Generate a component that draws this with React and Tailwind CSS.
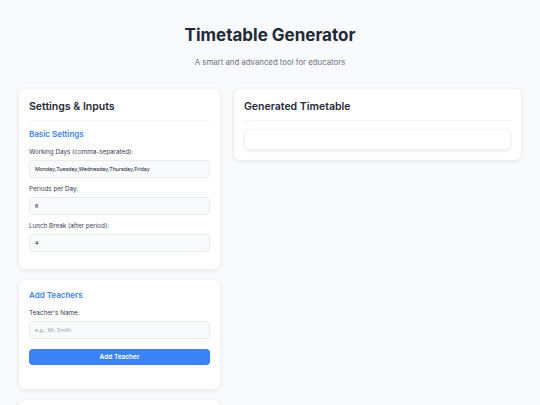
export default function App() {
  const inputCls =
    'block w-full h-[18px] rounded-[4px] border border-[#e8ecf1] bg-[#f8fafc] px-[5px] text-[5.3px] leading-[8px] text-[#111827] outline-none';
  const labelCls = 'block text-[6.3px] leading-[8px] text-[#374151] mb-[4px]';

  return (
    <div className="min-h-screen bg-[#f8fafc] font-['Inter',sans-serif] text-[#1f2937]">
      <header className="pt-[24px] pb-[22px] text-center">
        <h1 className="text-[17px] font-bold leading-[22px] text-[#1f2937]">Timetable Generator</h1>
        <p className="mt-[11px] text-[7.8px] leading-[10px] text-[#6b7280]">A smart and advanced tool for educators</p>
      </header>

      <div className="mx-auto grid w-[502px] grid-cols-[201px_1fr] items-start gap-[14px]">
        {/* Left column */}
        <div className="flex flex-col gap-[11px]">
          <div className="rounded-[6px] bg-white px-[10px] pt-[11px] pb-[17px] shadow-[0_1px_4px_rgba(0,0,0,0.1)]">
            <h2 className="text-[10.5px] font-semibold leading-[14px] pb-[6px] border-b border-[#f1f5f9]">
              Settings & Inputs
            </h2>
            <h3 className="mt-[8px] text-[8px] font-semibold leading-[10px] text-[#3b82f6]">Basic Settings</h3>
            <div className="mt-[9px]">
              <label className={labelCls}>Working Days (comma-separated):</label>
              <input className={inputCls} defaultValue="Monday,Tuesday,Wednesday,Thursday,Friday" />
            </div>
            <div className="mt-[7px]">
              <label className={labelCls}>Periods per Day:</label>
              <input className={inputCls} defaultValue="6" />
            </div>
            <div className="mt-[7px]">
              <label className={labelCls}>Lunch Break (after period):</label>
              <input className={inputCls} defaultValue="4" />
            </div>
          </div>

          <div className="rounded-[6px] bg-white px-[10px] pt-[10px] pb-[24px] shadow-[0_1px_4px_rgba(0,0,0,0.1)]">
            <h3 className="text-[8px] font-semibold leading-[10px] text-[#3b82f6]">Add Teachers</h3>
            <div className="mt-[9px]">
              <label className={labelCls}>Teacher's Name:</label>
              <input className={inputCls + ' placeholder:text-[#9ca3af]'} placeholder="e.g., Mr. Smith" />
            </div>
            <button className="mt-[10px] block h-[16px] w-full rounded-[4px] bg-[#3b82f6] text-[6.5px] font-semibold leading-[16px] text-white">
              Add Teacher
            </button>
          </div>

          <div className="h-[40px] rounded-[6px] bg-white shadow-[0_1px_4px_rgba(0,0,0,0.1)]" />
        </div>

        {/* Right column */}
        <div className="rounded-[6px] bg-white px-[10px] pt-[11px] pb-[10px] shadow-[0_1px_4px_rgba(0,0,0,0.1)]">
          <h2 className="text-[10.5px] font-semibold leading-[14px] pb-[6px] border-b border-[#f1f5f9]">
            Generated Timetable
          </h2>
          <div className="mt-[8px] h-[21px] rounded-[5px] border border-[#f3f4f6] bg-white shadow-[0_1px_3px_rgba(0,0,0,0.1)]" />
        </div>
      </div>
    </div>
  );
}
